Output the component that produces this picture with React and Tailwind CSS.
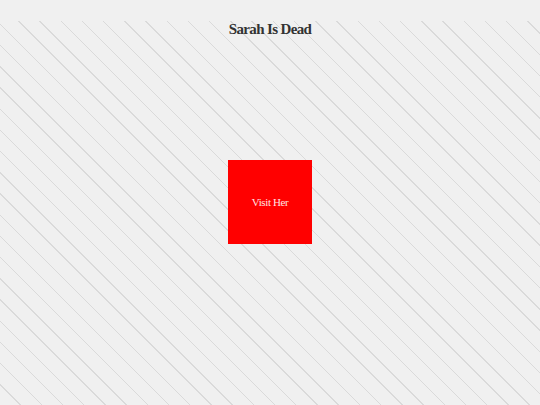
import React from "react";

export default function App() {
  return (
    <div className="min-h-[405px] bg-[#f0f0f0] pt-[21px] font-['Liberation_Serif',serif]">
      <div className="min-h-[384px] flex flex-col items-center bg-[repeating-linear-gradient(45deg,#f0f0f0_0px,#f0f0f0_14px,#dadada_14px,#dadada_15px)]">
        <h1 className="mt-[1px] text-[15px] leading-[15px] font-bold tracking-[-0.65px] text-[#333]">Sarah Is Dead</h1>
        <a
          href="#"
          className="mt-[123px] w-[84px] h-[84px] bg-[#ff0000] flex items-center justify-center text-[11px] tracking-[-0.4px] text-[#ffe4e4]"
        >
          Visit Her
        </a>
      </div>
    </div>
  );
}
